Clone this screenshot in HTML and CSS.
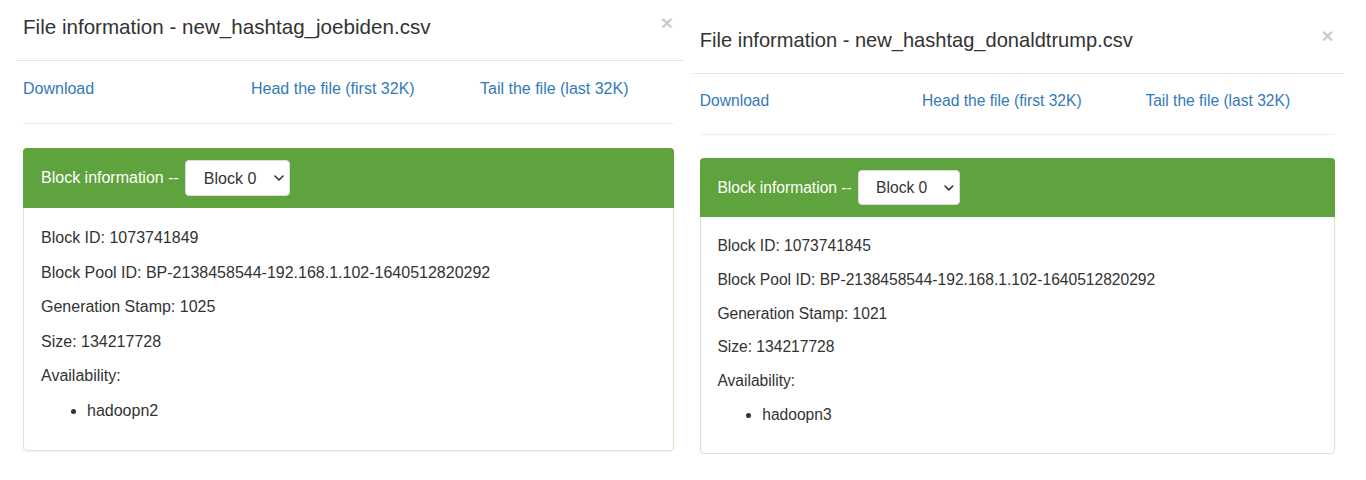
FILE: index.html
```html
<!DOCTYPE html>
<html lang="en">
<head>
<meta charset="utf-8">
<title>File information</title>
<link rel="stylesheet" href="styles.css">
</head>
<body class="page">
  <div class="modal">
    <div class="modal-header">
      <h4 class="modal-title">File information - new_hashtag_joebiden.csv</h4>
      <span class="close">&times;</span>
    </div>
    <div class="modal-body">
      <div class="links">
        <a href="#">Download</a>
        <a href="#">Head the file (first 32K)</a>
        <a href="#">Tail the file (last 32K)</a>
      </div>
      <hr class="sep">
      <div class="panel">
        <div class="panel-heading">
          <span>Block information --</span>
          <span class="select-wrap">
            <select class="block-select"><option>Block 0</option></select>
            <svg class="chev" width="10" height="6" viewBox="0 0 10 6"><polyline points="1,1 5,5 9,1" fill="none" stroke="#333" stroke-width="1.6" stroke-linecap="round" stroke-linejoin="round"/></svg>
          </span>
        </div>
        <div class="panel-body">
          <p>Block ID: 1073741849</p>
          <p>Block Pool ID: BP-2138458544-192.168.1.102-1640512820292</p>
          <p>Generation Stamp: 1025</p>
          <p>Size: 134217728</p>
          <p>Availability:</p>
          <ul><li>hadoopn2</li></ul>
        </div>
      </div>
    </div>
  </div>

  <div class="modal modal-small">
    <div class="modal-header">
      <h4 class="modal-title">File information - new_hashtag_donaldtrump.csv</h4>
      <span class="close">&times;</span>
    </div>
    <div class="modal-body">
      <div class="links">
        <a href="#">Download</a>
        <a href="#">Head the file (first 32K)</a>
        <a href="#">Tail the file (last 32K)</a>
      </div>
      <hr class="sep">
      <div class="panel">
        <div class="panel-heading">
          <span>Block information --</span>
          <span class="select-wrap">
            <select class="block-select"><option>Block 0</option></select>
            <svg class="chev" width="10" height="6" viewBox="0 0 10 6"><polyline points="1,1 5,5 9,1" fill="none" stroke="#333" stroke-width="1.6" stroke-linecap="round" stroke-linejoin="round"/></svg>
          </span>
        </div>
        <div class="panel-body">
          <p>Block ID: 1073741845</p>
          <p>Block Pool ID: BP-2138458544-192.168.1.102-1640512820292</p>
          <p>Generation Stamp: 1021</p>
          <p>Size: 134217728</p>
          <p>Availability:</p>
          <ul><li>hadoopn3</li></ul>
        </div>
      </div>
    </div>
  </div>
</body>
</html>
```
FILE: styles.css
```css
html, body {
  background: #fff;
}
.page {
  margin: 0;
  padding-left: 16px;
  display: flex;
  align-items: flex-start;
  gap: 9px;
  font-family: "Liberation Sans", Arial, sans-serif;
  font-size: 16px;
  color: #333;
}
.modal {
  width: 668px;
  flex: none;
}
.modal-small {
  zoom: 0.975;
  margin-top: 14.4px;
}
.modal-header {
  display: flex;
  justify-content: space-between;
  align-items: flex-start;
  padding: 12px 11px 19px 7px;
  border-bottom: 1px solid #e5e5e5;
}
.modal-title {
  margin: 0;
  font-size: 20.6px;
  font-weight: normal;
  line-height: 29px;
}
.close {
  font-size: 21px;
  font-weight: bold;
  line-height: 1;
  color: #000;
  opacity: 0.2;
  margin-top: 0;
}
.modal-body {
  padding: 16px 10px 0 7px;
}
.links {
  display: grid;
  grid-template-columns: 228px 229px 1fr;
  line-height: 24px;
}
.links a {
  color: #337ab7;
  text-decoration: none;
  white-space: nowrap;
}
.sep {
  margin: 22px 0 24px;
  border: 0;
  border-top: 1px solid #eee;
  height: 0;
}
.panel {
  border: 1px solid #d6e9c6;
  border-radius: 4px;
  box-shadow: 0 1px 1px rgba(0, 0, 0, 0.05);
  background: #fff;
}
.panel-heading {
  display: flex;
  align-items: center;
  background: #5fa33e;
  color: #fff;
  margin: -1px -1px 0;
  padding: 12px 18px;
  border-radius: 4px 4px 0 0;
  line-height: 36px;
}
.select-wrap {
  position: relative;
  display: inline-flex;
  margin-left: 6px;
}
.block-select {
  appearance: none;
  -webkit-appearance: none;
  width: 105px;
  height: 36px;
  padding: 0 0 0 18px;
  border: 1px solid #ddd;
  border-radius: 4px;
  background: #fff;
  color: #333;
  font-family: "Liberation Sans", Arial, sans-serif;
  font-size: 16px;
}
.chev {
  position: absolute;
  right: 6px;
  top: 15px;
  pointer-events: none;
}
.panel-body {
  padding: 18px 17px 17px;
}
.panel-body p {
  margin: 0 0 10px;
  line-height: 24.5px;
}
.panel-body ul {
  margin: 0 0 10px;
  padding-left: 46px;
  line-height: 24.5px;
}
```
